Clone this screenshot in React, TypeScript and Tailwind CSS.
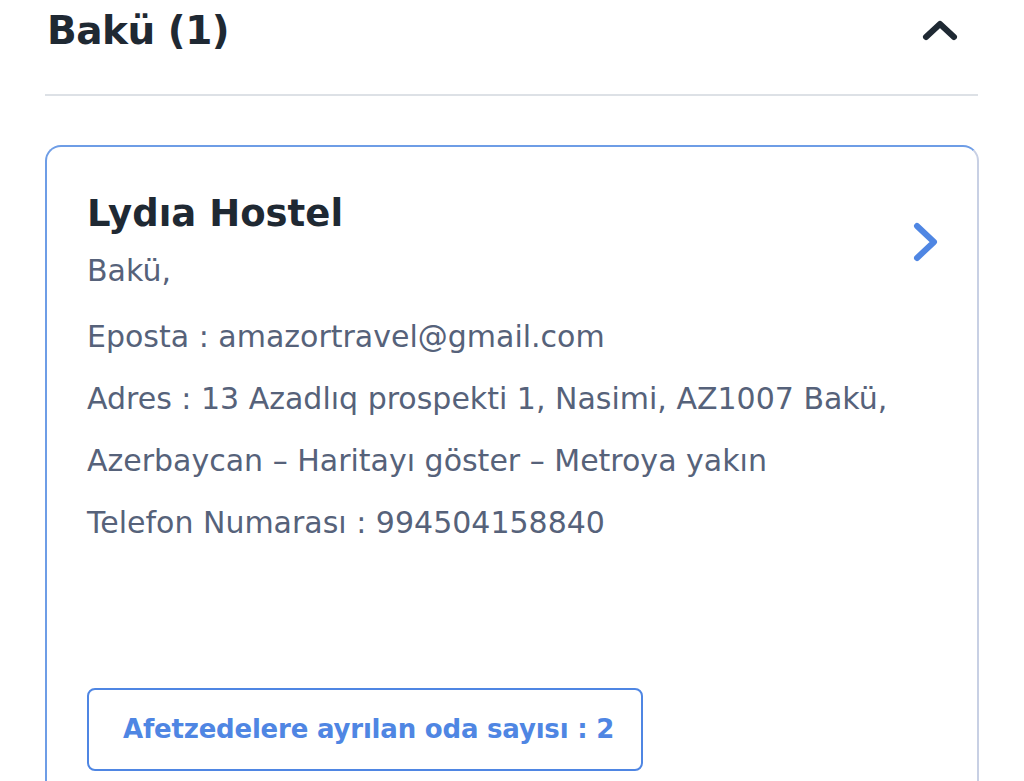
import React from 'react';

const FONT = "font-['DejaVu_Sans',sans-serif]";

const ChevronUp = () => (
  <svg width="38" height="26" viewBox="0 0 38 26" fill="none">
    <path d="M5 20 L19 7 L33 20" stroke="#1f2933" strokeWidth="6" strokeLinecap="round" strokeLinejoin="round" />
  </svg>
);

const ChevronRight = () => (
  <svg width="30" height="42" viewBox="0 0 30 42" fill="none">
    <path d="M6 5 L23 21 L6 37" stroke="#4f86e3" strokeWidth="6" strokeLinecap="round" strokeLinejoin="round" />
  </svg>
);

export default function App() {
  return (
    <div className={`${FONT} bg-white w-[1024px] h-[781px] overflow-hidden`}>
      <div className="px-[45px]">
        {/* Header */}
        <div className="flex items-center justify-between h-[60px] pl-[2px] pr-[20px]">
          <h2 className="text-[39px] font-bold text-[#1f2933] leading-none tracking-[-0.5px]">Bakü (1)</h2>
          <ChevronUp />
        </div>
        <div className="mt-[34px] h-[2px] bg-[#dde1e6] mr-[1px]" />

        {/* Card */}
        <div className="mt-[49px] rounded-[16px] border-2 border-[#6e9de6] border-r-[#c8d0e4] border-b-[#c8d0e4] pl-[40px] pr-[36px] pt-[48px] h-[700px]">
          <div className="flex justify-between">
            <div>
              <h3 className="text-[37px] font-bold text-[#1f2933] leading-none">Lydıa Hostel</h3>
              <p className="mt-[24px] text-[30px] text-[#56627a] leading-none">Bakü,</p>
            </div>
            <div className="pt-[26px]">
              <ChevronRight />
            </div>
          </div>

          <div className="mt-[20px] flex flex-col text-[30px] text-[#56627a] leading-[62px]">
            <p>Eposta : amazortravel@gmail.com</p>
            <p>Adres : 13 Azadlıq prospekti 1, Nasimi, AZ1007 Bakü,</p>
            <p>Azerbaycan – Haritayı göster – Metroya yakın</p>
            <p>Telefon Numarası : 994504158840</p>
          </div>

          <button className="mt-[134px] w-[556px] h-[83px] border-2 border-[#4f86e3] rounded-[8px] text-[26px] font-bold text-[#4f86e3] text-left pl-[34px] tracking-[-0.2px]">
            Afetzedelere ayrılan oda sayısı : 2
          </button>
        </div>
      </div>
    </div>
  );
}
